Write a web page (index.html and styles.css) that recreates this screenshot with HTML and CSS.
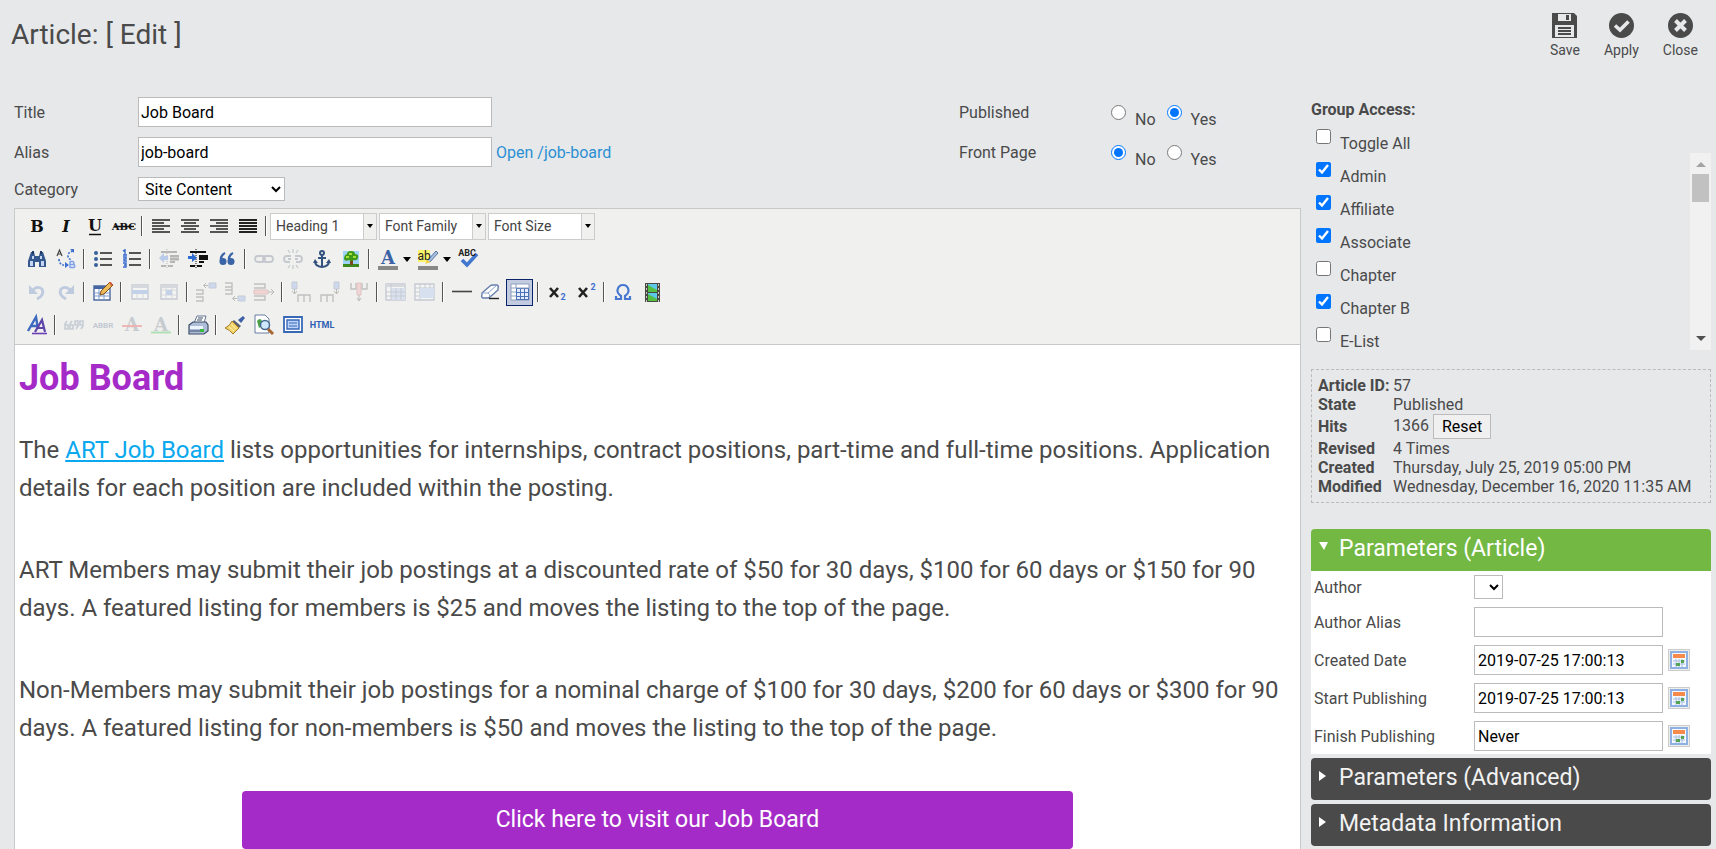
FILE: index.html
```html
<!DOCTYPE html>
<html lang="en">
<head>
  <meta charset="UTF-8" />
  <meta name="viewport" content="width=device-width, initial-scale=1" />
  <title>Article: [ Edit ]</title>
  <link rel="stylesheet" href="styles.css">
</head>
<body>
  <header class="page-header">
    <h1>Article: [ Edit ]</h1>
    <div class="actions">
      <button type="button">
        <svg viewBox="0 0 25 25"><path fill="#4a4a4a" d="M0 0h22l3 3v22H0z"/><path fill="#e6e8ea" d="M6 1h13v7H6zM3 12h19v12H3z"/><path fill="#4a4a4a" d="M14 2h3v5h-3zM6 14h13v2H6zM6 17h13v2H6zM6 20h13v2H6z"/></svg>
        Save
      </button>
      <button type="button">
        <svg viewBox="0 0 25 25"><circle cx="12.500" cy="12.500" r="12.500" fill="#4a4a4a"/><path fill="none" stroke="#e6e8ea" stroke-width="3.600" d="M6 12.500l5 4.500 8.500-8.500"/></svg>
        Apply
      </button>
      <button type="button">
        <svg viewBox="0 0 25 25"><circle cx="12.500" cy="12.500" r="12.500" fill="#4a4a4a"/><path fill="none" stroke="#e6e8ea" stroke-width="4" d="M7.500 7.500l10 10M17.500 7.500l-10 10"/></svg>
        Close
      </button>
    </div>
  </header>

  <main class="layout">
    <section class="main-col">
      <div class="fields">
        <div class="fields-left">
          <div class="field">
            <label for="title">Title</label>
            <input type="text" id="title" value="Job Board" />
          </div>
          <div class="field">
            <label for="alias">Alias</label>
            <input type="text" id="alias" value="job-board" />
            <a href="#job-board">Open /job-board</a>
          </div>
          <div class="field">
            <label for="category">Category</label>
            <select id="category"><option>Site Content</option></select>
          </div>
        </div>
        <div class="fields-right">
          <div class="field" role="radiogroup" aria-label="Published">
            <span class="field-name">Published</span>
            <label class="option"><input type="radio" name="published" /><span>No</span></label>
            <label class="option"><input type="radio" name="published" checked /><span>Yes</span></label>
          </div>
          <div class="field" role="radiogroup" aria-label="Front Page">
            <span class="field-name">Front Page</span>
            <label class="option"><input type="radio" name="frontpage" checked /><span>No</span></label>
            <label class="option"><input type="radio" name="frontpage" /><span>Yes</span></label>
          </div>
        </div>
      </div>

      <div class="editor">
        <div class="toolbar">
          <div class="toolbar-row">
            <button type="button" aria-label="Bold"><svg viewBox="0 0 20 20"><text x="10" y="16" class="glyph">B</text></svg></button>
            <button type="button" aria-label="Italic"><svg viewBox="0 0 20 20"><text x="10" y="16" class="glyph slanted">I</text></svg></button>
            <button type="button" aria-label="Underline"><svg viewBox="0 0 20 20"><text x="10" y="15" class="glyph">U</text><path d="M4 18.500h12" stroke="#111" stroke-width="1.500"/></svg></button>
            <button type="button" aria-label="Strikethrough"><svg viewBox="0 0 20 20"><text x="10" y="14" class="glyph tiny">ABC</text><path d="M0 10.500h20" stroke="#111" stroke-width="1.500"/></svg></button>
            <i class="sep"></i>
            <button type="button" aria-label="Align left"><svg viewBox="0 0 20 20"><path d="M1 4h18M1 7h12M1 10h18M1 13h12M1 16h18" stroke="#222" stroke-width="1.600"/></svg></button>
            <button type="button" aria-label="Align center"><svg viewBox="0 0 20 20"><path d="M1 4h18M4 7h12M1 10h18M4 13h12M1 16h18" stroke="#222" stroke-width="1.600"/></svg></button>
            <button type="button" aria-label="Align right"><svg viewBox="0 0 20 20"><path d="M1 4h18M7 7h12M1 10h18M7 13h12M1 16h18" stroke="#222" stroke-width="1.600"/></svg></button>
            <button type="button" aria-label="Align full"><svg viewBox="0 0 20 20"><path d="M1 4h18M1 7h18M1 10h18M1 13h18M1 16h18" stroke="#222" stroke-width="1.800"/></svg></button>
            <i class="sep"></i>
            <div class="listbox"><select aria-label="Format"><option>Heading 1</option></select><span></span></div>
            <div class="listbox"><select aria-label="Font family"><option>Font Family</option></select><span></span></div>
            <div class="listbox"><select aria-label="Font size"><option>Font Size</option></select><span></span></div>
          </div>

          <div class="toolbar-row">
            <button type="button" aria-label="Find"><svg viewBox="0 0 20 20"><path d="M4 3h3l1 4h4l1-4h3l3 9v6h-7v-5H8v5H1v-6z" fill="#34578f"/><path d="M5 2h2v3H5zM13 2h2v3h-2z" fill="#1f3a69"/><path d="M3 12h3v5H3zM14 12h3v5h-3zM5 7h2v3H5zM13 7h2v3h-2z" fill="#c3d5f1"/></svg></button>
            <button type="button" aria-label="Find and replace"><svg viewBox="0 0 20 20"><path d="M1 7l2.500-6L6 7M2 5h3" fill="none" stroke="#444" stroke-width="1.200"/><path d="M14 12v7M14 12.500h3q2 1.500 0 3h-3h4q1.500 1.500 0 3h-4" fill="none" stroke="#7c9fe8" stroke-width="1.400"/><path d="M3 10q0 7 8 6M17 2q-5 1-5 5t4 3" fill="none" stroke="#3f6fd0" stroke-width="1.600" stroke-dasharray="2 1.500"/><path d="M14 0h4v4zM9 13l4 3-4 3z" fill="#3f6fd0"/></svg></button>
            <i class="sep"></i>
            <button type="button" aria-label="Bullet list"><svg viewBox="0 0 20 20"><path d="M7 4h12M7 10h12M7 16h12" stroke="#222" stroke-width="1.500"/><g fill="#3a5f9c"><circle cx="3" cy="4" r="2"/><circle cx="3" cy="10" r="2"/><circle cx="3" cy="16" r="2"/></g></svg></button>
            <button type="button" aria-label="Numbered list"><svg viewBox="0 0 20 20"><path d="M7 4h12M7 10h12M7 16h12" stroke="#222" stroke-width="1.500"/><path d="M1 2l2-1v5M1 6h4M1 8h3v2H2v2h3M1 14h3v2H2h2v2H1" fill="none" stroke="#3a6bd0" stroke-width="1.400"/></svg></button>
            <i class="sep"></i>
            <button type="button" aria-label="Outdent" class="off"><svg viewBox="0 0 20 20"><path d="M2 3h16M11 7h9M11 13h5M2 17h5M9 17h5" stroke="#333" stroke-width="2"/><path d="M11 10h9" stroke="#333" stroke-width="3"/><path d="M8 0v20" stroke="#333" stroke-dasharray="1 1"/><path d="M9 7H5V4L0 9l5 5v-3h4z" fill="#3f7bdf"/></svg></button>
            <button type="button" aria-label="Indent"><svg viewBox="0 0 20 20"><path d="M2 3h16M11 7h9M11 13h5M2 17h5M9 17h5" stroke="#111" stroke-width="2"/><path d="M11 9.500h9" stroke="#111" stroke-width="3"/><path d="M8 0v20" stroke="#111" stroke-dasharray="1 1"/><path d="M0 7h4V4l5 5-5 4v-3H0z" fill="#2f6bd0"/></svg></button>
            <button type="button" aria-label="Blockquote"><svg viewBox="0 0 20 20"><g fill="#3a64a8"><circle cx="6" cy="12.500" r="3.500"/><circle cx="14" cy="12.500" r="3.500"/></g><path d="M4 12q-.500-6 4-8M12 12q-.500-6 4-8" fill="none" stroke="#3a64a8" stroke-width="2.400"/></svg></button>
            <i class="sep"></i>
            <button type="button" aria-label="Link" class="off"><svg viewBox="0 0 20 20"><g fill="none" stroke="#5f7085" stroke-width="1.800"><rect x="1" y="7" width="10" height="6" rx="3"/><rect x="9" y="7" width="10" height="6" rx="3"/></g></svg></button>
            <button type="button" aria-label="Unlink" class="off"><svg viewBox="0 0 20 20"><g fill="none" stroke="#5f7085" stroke-width="1.800"><path d="M8 7H4q-3 0-3 3t3 3h3M12 7h4q3 0 3 3t-3 3h-3M5 10h3M12 10h3"/><path d="M10 0v4M5 1l2 3M15 1l-2 3M10 20v-4M5 19l2-3M15 19l-2-3" stroke-width="1.200"/></g></svg></button>
            <button type="button" aria-label="Anchor"><svg viewBox="0 0 20 20"><g fill="none" stroke="#34527f" stroke-width="2"><circle cx="10" cy="4" r="2"/><path d="M10 6v12M6 9h8M3 12q0 5.500 7 6 7-.500 7-6"/></g><path d="M1 14l2-4 3 4zM14 14l3-4 2 4z" fill="#34527f"/></svg></button>
            <button type="button" aria-label="Image"><svg viewBox="0 0 20 20"><path fill="#9fd3f8" d="M2 2h16v16H2z"/><path fill="#3c8a1c" d="M2 15h16v3H2z"/><path fill="#7b4a1c" d="M9 9h3v7H9z"/><path fill="#3f9a18" d="M6 5q0-3 4-3t4 3q4 0 3 4-1 3-4 2-3 2-5 0-4 2-5-1 0-4 3-5z"/><path fill="#a6df3c" d="M8 4h3v2H8zM5 7h3v2H5zM12 7h3v2h-3z"/></svg></button>
            <i class="sep"></i>
            <button type="button" aria-label="Text color"><svg viewBox="0 0 20 20"><text x="10" y="15" class="glyph blue">A</text><path d="M0 17h20v4H0z" fill="#888"/></svg></button>
            <span class="caret"></span>
            <button type="button" aria-label="Highlight color"><svg viewBox="0 0 20 20"><path d="M0 1h12v12H0z" fill="#fbf36a"/><path d="M18 2l2 2-8 9-3-1z" fill="#a9c1e6" stroke="#5d7396"/><text x="6" y="11" class="ab">ab</text><path d="M9 11l4 2-6 2z" fill="#f0d34a"/><path d="M0 17h20v4H0z" fill="#888"/></svg></button>
            <span class="caret"></span>
            <button type="button" aria-label="Spellcheck"><svg viewBox="0 0 20 20"><path d="M4 11l5 5L19 5" fill="none" stroke="#4377cf" stroke-width="3.600"/><text x="9" y="7" class="spell">ABC</text></svg></button>
          </div>

          <div class="toolbar-row">
            <button type="button" aria-label="Undo" class="off"><svg viewBox="0 0 20 20"><path d="M5 9q5-6 10-2 3 6-5 10" fill="none" stroke="#4f78c0" stroke-width="2.800"/><path d="M2 3v9h9z" fill="#4f78c0"/></svg></button>
            <button type="button" aria-label="Redo" class="off"><svg viewBox="0 0 20 20"><path d="M15 9Q10 3 5 7q-3 6 5 10" fill="none" stroke="#4f78c0" stroke-width="2.800"/><path d="M18 3v9H9z" fill="#4f78c0"/></svg></button>
            <i class="sep"></i>
            <button type="button" aria-label="Table"><svg viewBox="0 0 20 20"><path d="M1 4h16v14H1z" fill="#fff" stroke="#4d6a9e" stroke-width="1.400"/><path d="M1 4h16v3H1z" fill="#44659f"/><path d="M1 11h16M1 14h16M6 7v11M11 7v11" stroke="#7b9bcc"/><path d="M17 0l3 3-9 9-4 1 1-4z" fill="#edbb5a" stroke="#7b501d"/><path d="M16 0h2l2 3-2 1z" fill="#d35a3c"/></svg></button>
            <i class="sep"></i>
            <button type="button" aria-label="Row properties" class="off"><svg viewBox="0 0 20 20"><path d="M2 3h16v14H2z" fill="#fff" stroke="#667999" stroke-width="1.400"/><path d="M2 3h16v3H2z" fill="#99a5b8"/><path d="M2 8h16v4H2z" fill="#5f8be0"/><path d="M7 12v5M13 12v5" stroke="#99a5b8"/></svg></button>
            <button type="button" aria-label="Cell properties" class="off"><svg viewBox="0 0 20 20"><path d="M2 3h16v14H2z" fill="#fff" stroke="#667999" stroke-width="1.400"/><path d="M2 3h16v3H2z" fill="#99a5b8"/><path d="M2 8h16M2 13h16M7 3v14M13 3v14" stroke="#99a5b8"/><path d="M7 8h6v5H7z" fill="#5f8be0"/></svg></button>
            <i class="sep"></i>
            <button type="button" aria-label="Insert row before" class="off"><svg viewBox="0 0 20 20"><path d="M0 8h7v4H0M0 19h7v-4H0M0 12h7" fill="none" stroke="#555" stroke-width="1.400"/><path d="M13 1h7v5h-7z" fill="#7fa4ef" stroke="#667999"/><path d="M12 3.500H8M10 1L7.500 3.500 10 6" fill="none" stroke="#444"/></svg></button>
            <button type="button" aria-label="Insert row after" class="off"><svg viewBox="0 0 20 20"><path d="M0 1h7v4H0M0 12h7V5M0 8h7" fill="none" stroke="#555" stroke-width="1.400"/><path d="M13 14h7v5h-7z" fill="#7fa4ef" stroke="#667999"/><path d="M12 16.500H8M10 14l-2.500 2.500L10 19" fill="none" stroke="#444"/></svg></button>
            <button type="button" aria-label="Delete row" class="off"><svg viewBox="0 0 20 20"><path d="M0 2h11v4H0M0 18h11v-4H0" fill="none" stroke="#555" stroke-width="1.400"/><path d="M0 8h14v4H0z" fill="#f39a9a" stroke="#b66"/><path d="M14 10h6M17 7l3 3-3 3" fill="none" stroke="#444"/></svg></button>
            <i class="sep"></i>
            <button type="button" aria-label="Insert column before" class="off"><svg viewBox="0 0 20 20"><path d="M7 20v-7h12v7M13 13v7" fill="none" stroke="#555" stroke-width="1.400"/><path d="M1 0h5v7H1z" fill="#7fa4ef" stroke="#667999"/><path d="M3.500 7v5M1 9l2.500 3L6 9" fill="none" stroke="#444"/></svg></button>
            <button type="button" aria-label="Insert column after" class="off"><svg viewBox="0 0 20 20"><path d="M1 20v-7h12v7M7 13v7" fill="none" stroke="#555" stroke-width="1.400"/><path d="M14 0h5v7h-5z" fill="#7fa4ef" stroke="#667999"/><path d="M16.500 7v5M14 9l2.500 3L19 9" fill="none" stroke="#444"/></svg></button>
            <button type="button" aria-label="Delete column" class="off"><svg viewBox="0 0 20 20"><path d="M2 1v6h5V1M18 1v6h-5V1" fill="none" stroke="#555" stroke-width="1.400"/><path d="M8 1h4v12H8z" fill="#f39a9a" stroke="#b66"/><path d="M10 13v6M8 16l2 3 2-3" fill="none" stroke="#444"/></svg></button>
            <i class="sep"></i>
            <button type="button" aria-label="Split cells" class="off"><svg viewBox="0 0 20 20"><path d="M0 2h19v16H0z" fill="#fff" stroke="#667999" stroke-width="1.400"/><path d="M0 2h19v3H0z" fill="#99a5b8"/><path d="M5 6h14v12H5z" fill="#aac4f2"/><path d="M0 10h19M0 14h19M5 2v16M10 6v12M15 6v12" stroke="#667999"/></svg></button>
            <button type="button" aria-label="Merge cells" class="off"><svg viewBox="0 0 20 20"><path d="M0 2h19v16H0z" fill="#fff" stroke="#667999" stroke-width="1.400"/><path d="M0 6h19M0 10h5M0 14h5M5 2v16M10 2v4M15 2v4" stroke="#667999"/><path d="M5 6h14v10H5z" fill="#9fbcf0"/></svg></button>
            <i class="sep"></i>
            <button type="button" aria-label="Horizontal rule"><svg viewBox="0 0 20 20"><path d="M0 9.500h20" stroke="#444" stroke-width="1.600"/></svg></button>
            <button type="button" aria-label="Remove formatting"><svg viewBox="0 0 20 20"><path d="M1 11l8-7q1-1 3-1h4q2 1 1 3v2l-8 7q-1 1-3 1H2q-2-1-1-3z" fill="#fff" stroke="#667fae" stroke-width="1.400"/><path d="M1 11h6q2 1 2 4M7 11l9-8" fill="none" stroke="#8ba2cb"/><path d="M8 16.500h10" stroke="#222" stroke-width="1.400"/></svg></button>
            <button type="button" aria-label="Guidelines" class="active"><svg viewBox="0 0 20 20"><path d="M1 2h18v16H1z" fill="#fff" stroke="#8e9fbd"/><path d="M6 6h13v12H6z" fill="#4a70b8"/><path d="M1 6h18M1 10h5M1 14h5M6 2v4" stroke="#8e9fbd"/><path d="M7 7h3v3H7zM11 7h3v3h-3zM15 7h3v3h-3zM7 11h3v3H7zM11 11h3v3h-3zM15 11h3v3h-3zM7 15h3v2H7zM11 15h3v2h-3zM15 15h3v2h-3z" fill="#e3edff"/></svg></button>
            <i class="sep"></i>
            <button type="button" aria-label="Subscript"><svg viewBox="0 0 20 20"><path d="M3 6l8 9M11 6l-8 9" stroke="#222" stroke-width="2.600"/><text x="16" y="18" class="index">2</text></svg></button>
            <button type="button" aria-label="Superscript"><svg viewBox="0 0 20 20"><path d="M3 6l8 9M11 6l-8 9" stroke="#222" stroke-width="2.600"/><text x="17" y="8" class="index">2</text></svg></button>
            <i class="sep"></i>
            <button type="button" aria-label="Special character"><svg viewBox="0 0 20 20"><path d="M3 14v3h5v-3q-4-3-3.500-6Q5.500 3 10 3t5.500 5q.500 3-3.500 6v3h5v-3" fill="none" stroke="#4777d1" stroke-width="2.200"/></svg></button>
            <button type="button" aria-label="Media"><svg viewBox="0 0 20 20"><path d="M3 1h15v19H3z" fill="#4a4a42"/><path d="M6 2h9v8H6zM6 11h9v8H6z" fill="#5cc8ea"/><path d="M6 3l9 5v2H6zM6 12l9 5v2H6z" fill="#52c043"/><path d="M4.500 2v18M16.500 2v18" stroke="#ccc" stroke-dasharray="2 2"/></svg></button>
          </div>

          <div class="toolbar-row">
            <button type="button" aria-label="Edit style"><svg viewBox="0 0 20 20"><path d="M1 16L9 2l2 12M4 11h6" fill="none" stroke="#3d6ac0" stroke-width="2.400"/><path d="M8 17l7-12 3 12M10 13h6" fill="none" stroke="#5d44a8" stroke-width="2.200"/><path d="M5 18.500h15" stroke="#6c3fb5" stroke-width="1.600"/></svg></button>
            <i class="sep"></i>
            <button type="button" aria-label="Citation" class="off"><svg viewBox="0 0 20 20"><path d="M3 6L1 9v5h3v-4H1M8 6L6 9v5h3v-4H6M12 14l2-3V6h-3v4h3M17 14l2-3V6h-3v4h3" fill="none" stroke="#68809f" stroke-width="1.600"/></svg></button>
            <button type="button" aria-label="Abbreviation" class="off"><svg viewBox="0 0 20 20"><text x="10" y="13" class="label-text">ABBR</text></svg></button>
            <button type="button" aria-label="Deletion" class="off"><svg viewBox="0 0 20 20"><text x="10" y="16" class="glyph grey">A</text><path d="M0 11h20" stroke="#ee2222" stroke-width="1.800"/></svg></button>
            <button type="button" aria-label="Insertion" class="off"><svg viewBox="0 0 20 20"><text x="10" y="16" class="glyph grey">A</text><path d="M0 17.500h20" stroke="#11bb22" stroke-width="1.800"/></svg></button>
            <i class="sep"></i>
            <button type="button" aria-label="Print"><svg viewBox="0 0 20 20"><path d="M6 8l3-7h9l-2 7z" fill="#fff" stroke="#627594"/><path d="M1 10l4-3h13l2 3v6l-4 3H1z" fill="#aebed8" stroke="#3c4d69" stroke-width="1.200"/><path d="M2 11h13v3H2z" fill="#eef4ff"/><path d="M2 16h12M10 3h5M9 5h5" stroke="#3c4d69"/><path d="M12 14h4v3h-4z" fill="#39b83d"/></svg></button>
            <i class="sep"></i>
            <button type="button" aria-label="Clean up code"><svg viewBox="0 0 20 20"><path d="M13 5l5-4 2 2-4 5z" fill="#3f61a5"/><path d="M9 5l7 6-2 2-7-6z" fill="#596274"/><path d="M7 6l7 7-6 6q-3-4-8-6 5-2 7-7z" fill="#f2d36b" stroke="#a47b24"/><path d="M4 12l5 4M6 9l5 5" stroke="#fff2ad"/></svg></button>
            <button type="button" aria-label="Preview"><svg viewBox="0 0 20 20"><path d="M1 0h10l4 4v14H1z" fill="#fff" stroke="#667ca1"/><path d="M3 6q3-4 5 0t-3 7z" fill="#49a24a"/><circle cx="11" cy="10" r="4.500" fill="#cee9fb" stroke="#47698f" stroke-width="1.500"/><path d="M14 14l5 5" stroke="#a76632" stroke-width="3"/></svg></button>
            <button type="button" aria-label="Fullscreen"><svg viewBox="0 0 20 20"><path d="M1 2h18v15H1z" fill="#fff" stroke="#3968b7" stroke-width="1.800"/><path d="M4 5h12v9H4z" fill="#bbd2f9" stroke="#3968b7" stroke-width="1.400"/><path d="M6 8h8M6 11h8" stroke="#3968b7"/></svg></button>
            <button type="button" aria-label="HTML source"><svg viewBox="0 0 24 20" class="wide"><text x="12" y="13" class="label-text html">HTML</text></svg></button>
          </div>
        </div>

        <article class="content">
          <h2>Job Board</h2>
          <p>The <a href="#board">ART Job Board</a> lists opportunities for internships, contract positions, part-time and full-time positions. Application details for each position are included within the posting.</p>
          <p>ART Members may submit their job postings at a discounted rate of $50 for 30 days, $100 for 60 days or $150 for 90 days. A featured listing for members is $25 and moves the listing to the top of the page.</p>
          <p>Non-Members may submit their job postings for a nominal charge of $100 for 30 days, $200 for 60 days or $300 for 90 days. A featured listing for non-members is $50 and moves the listing to the top of the page.</p>
          <a class="cta" href="#board">Click here to visit our Job Board</a>
        </article>
      </div>
    </section>

    <aside class="side-col">
      <h3>Group Access:</h3>
      <div class="group-row"><label class="option"><input type="checkbox" /><span>Toggle All</span></label></div>
      <div class="group-box">
        <div class="group-list">
          <div class="group-row"><label class="option"><input type="checkbox" checked /><span>Admin</span></label></div>
          <div class="group-row"><label class="option"><input type="checkbox" checked /><span>Affiliate</span></label></div>
          <div class="group-row"><label class="option"><input type="checkbox" checked /><span>Associate</span></label></div>
          <div class="group-row"><label class="option"><input type="checkbox" /><span>Chapter</span></label></div>
          <div class="group-row"><label class="option"><input type="checkbox" checked /><span>Chapter B</span></label></div>
          <div class="group-row"><label class="option"><input type="checkbox" /><span>E-List</span></label></div>
        </div>
        <div class="scrollbar">
          <span class="arrow up"></span>
          <span class="thumb"></span>
          <span class="arrow down"></span>
        </div>
      </div>

      <div class="info">
        <table>
          <tr><th scope="row">Article ID:</th><td>57</td></tr>
          <tr><th scope="row">State</th><td>Published</td></tr>
          <tr><th scope="row">Hits</th><td>1366 <button type="button">Reset</button></td></tr>
          <tr><th scope="row">Revised</th><td>4 Times</td></tr>
          <tr><th scope="row">Created</th><td>Thursday, July 25, 2019 05:00 PM</td></tr>
          <tr><th scope="row">Modified</th><td>Wednesday, December 16, 2020 11:35 AM</td></tr>
        </table>
      </div>

      <details class="panel" open>
        <summary>Parameters (Article)</summary>
        <div class="panel-body">
          <div class="param">
            <label for="author">Author</label>
            <select id="author"><option></option></select>
          </div>
          <div class="param">
            <label for="author_alias">Author Alias</label>
            <input type="text" id="author_alias" />
          </div>
          <div class="param">
            <label for="created">Created Date</label>
            <input type="text" id="created" value="2019-07-25 17:00:13" />
            <button type="button" class="calendar" aria-label="Pick created date"><svg viewBox="0 0 18 18"><path fill="#8fb0e2" d="M0 0h18v18H0z"/><path fill="#f4f8ff" d="M2 2h14v14H2z"/><path fill="#f58a4b" d="M3 3h12v4H3z"/><path d="M3 10h12M3 13h12M6 8v8M9 8v8M12 8v8" stroke="#aabfdd"/><path fill="#55a455" d="M11 9h3v3h-3zM6 12h4v3H6z"/></svg></button>
          </div>
          <div class="param">
            <label for="start">Start Publishing</label>
            <input type="text" id="start" value="2019-07-25 17:00:13" />
            <button type="button" class="calendar" aria-label="Pick start date"><svg viewBox="0 0 18 18"><path fill="#8fb0e2" d="M0 0h18v18H0z"/><path fill="#f4f8ff" d="M2 2h14v14H2z"/><path fill="#f58a4b" d="M3 3h12v4H3z"/><path d="M3 10h12M3 13h12M6 8v8M9 8v8M12 8v8" stroke="#aabfdd"/><path fill="#55a455" d="M11 9h3v3h-3zM6 12h4v3H6z"/></svg></button>
          </div>
          <div class="param">
            <label for="finish">Finish Publishing</label>
            <input type="text" id="finish" value="Never" />
            <button type="button" class="calendar" aria-label="Pick finish date"><svg viewBox="0 0 18 18"><path fill="#8fb0e2" d="M0 0h18v18H0z"/><path fill="#f4f8ff" d="M2 2h14v14H2z"/><path fill="#f58a4b" d="M3 3h12v4H3z"/><path d="M3 10h12M3 13h12M6 8v8M9 8v8M12 8v8" stroke="#aabfdd"/><path fill="#55a455" d="M11 9h3v3h-3zM6 12h4v3H6z"/></svg></button>
          </div>
        </div>
      </details>
      <details class="panel">
        <summary>Parameters (Advanced)</summary>
      </details>
      <details class="panel">
        <summary>Metadata Information</summary>
      </details>
    </aside>
  </main>
</body>
</html>
```
FILE: styles.css
```css
:root {
  --page-bg: #e6e8ea;
  --text-color: #4a4a4a;
  --border-color: #bbb;
  --green: #72b843;
  --purple: #a52bc8;
}

* {
  box-sizing: border-box;
}

body {
  margin: 0;
  min-height: 100vh;
  display: flex;
  flex-direction: column;
  background-color: var(--page-bg);
  color: var(--text-color);
  font-family: Roboto, sans-serif;
  font-size: 16px;
  line-height: 19px;
}

input,
select,
button {
  font-family: inherit;
  font-size: 16px;
  margin: 0;
}

input[type="text"] {
  height: 30px;
  padding: 0 2px;
  border: 1px solid var(--border-color);
  background-color: #fff;
  color: #000;
}

select {
  height: 24px;
  border: 1px solid var(--border-color);
  background-color: #fff;
  color: #000;
}

a {
  color: #2b90d4;
  text-decoration: none;
}

svg {
  display: block;
}

/* header */
.page-header {
  display: flex;
  justify-content: space-between;
  height: 97px;
  padding: 13px 18px 0 11px;
}

.page-header h1 {
  margin: 0;
  font-size: 28px;
  font-weight: 400;
  line-height: 44px;
}

.actions {
  display: flex;
  align-items: flex-start;
  gap: 24px;
}

.actions button {
  display: flex;
  flex-direction: column;
  align-items: center;
  gap: 4px;
  padding: 0;
  border: none;
  background: none;
  color: var(--text-color);
  font-size: 14px;
  line-height: 16px;
  cursor: pointer;
}

.actions svg {
  width: 25px;
  height: 25px;
}

.layout {
  display: flex;
  flex: 1;
  gap: 10px;
  padding: 0 5px 0 14px;
}

.main-col {
  flex: 1;
  min-width: 0;
  display: flex;
  flex-direction: column;
}

.side-col {
  width: 400px;
  flex: none;
}

/* form fields */
.fields {
  display: flex;
  justify-content: space-between;
  padding-bottom: 7px;
}

.fields-left,
.fields-right {
  display: flex;
  flex-direction: column;
  gap: 10px;
}

.fields-right {
  width: 342px;
}

.field {
  display: flex;
  align-items: center;
}

.fields-right .field {
  height: 30px;
}

.fields-left label {
  width: 124px;
}

.fields-left input {
  width: 354px;
}

.fields-left a {
  margin-left: 4px;
}

.fields-left select {
  width: 147px;
  padding-left: 2px;
}

.field-name {
  width: 152px;
}

.option {
  display: flex;
  align-items: flex-start;
  gap: 9px;
  height: 16px;
}

.option input {
  width: 15px;
  height: 15px;
  margin-top: 1px;
}

.option span {
  padding-top: 6px;
}

.fields-right .option {
  margin-right: 11px;
}

/* editor */
.editor {
  flex: 1;
  border: 1px solid #c8c8c8;
  border-bottom: none;
  background-color: #fff;
}

.toolbar {
  display: flex;
  flex-direction: column;
  gap: 5px;
  padding: 3px 7px 5px;
  border-bottom: 1px solid #c8c8c8;
  background-color: #f0f0ee;
}

.toolbar-row {
  display: flex;
  align-items: center;
  height: 28px;
}

.toolbar button {
  display: flex;
  align-items: center;
  justify-content: center;
  width: 27px;
  height: 27px;
  margin: 0 1px;
  padding: 0;
  border: 1px solid transparent;
  background: none;
}

.toolbar button.off {
  opacity: 0.3;
}

.toolbar button.active {
  border-color: #0a246a;
  background-color: #c2cbe0;
}

.toolbar svg {
  flex: none;
  width: 20px;
  height: 20px;
  overflow: visible;
}

.toolbar svg.wide {
  width: 24px;
}

.sep {
  width: 2px;
  height: 20px;
  margin: 0 3px;
  border-left: 1px solid #555;
  background-color: #fff;
}

.caret {
  width: 0;
  margin: 0 2px 0 1px;
  border: 4px solid transparent;
  border-top: 5px solid #000;
  border-bottom: none;
}

.glyph {
  font-family: "DejaVu Serif", serif;
  font-size: 16px;
  font-weight: 700;
  text-anchor: middle;
  fill: #111;
}

.slanted {
  font-style: italic;
}

.tiny {
  font-size: 10px;
}

.blue {
  font-size: 18px;
  fill: #3b62a5;
}

.grey {
  font-size: 18px;
  fill: #68788d;
}

.ab {
  font-size: 12px;
  text-anchor: middle;
  fill: #222;
}

.spell,
.label-text,
.index {
  font-size: 9px;
  font-weight: 700;
  text-anchor: middle;
  fill: #222;
}

.label-text {
  font-size: 8px;
  fill: #596f91;
}

.html {
  font-size: 9px;
  fill: #2e5fb4;
}

.index {
  fill: #3f6fd0;
}

.listbox {
  display: flex;
  width: 107px;
  height: 27px;
  margin-right: 2px;
  border: 1px solid #ccc;
  background-color: #fff;
}

.listbox select {
  flex: 1;
  min-width: 0;
  height: 25px;
  padding: 0 5px;
  border: none;
  appearance: none;
  color: #444;
  font-size: 14px;
}

.listbox span {
  display: flex;
  align-items: center;
  justify-content: center;
  width: 13px;
  border-left: 1px solid #ccc;
  background-color: #f0f0ee;
}

.listbox span::after {
  content: "";
  border: 3px solid transparent;
  border-top: 4px solid #000;
  border-bottom: none;
}

.content {
  padding: 14px 4px 0;
  font-size: 24px;
  line-height: 38px;
}

.content h2 {
  margin: 0 0 34px;
  color: var(--purple);
  font-size: 36px;
  line-height: 38px;
}

.content p {
  margin: 0 0 44px;
}

.content p a {
  color: #0aa8ee;
  text-decoration: underline;
}

.content .cta {
  display: block;
  width: 65%;
  margin: 0 auto;
  padding: 10px;
  border-radius: 4px;
  background-color: var(--purple);
  color: #fff;
  font-size: 23px;
  text-align: center;
}

/* group access */
.side-col h3 {
  margin: 3px 0 0;
  font-size: 16px;
  line-height: 20px;
}

.group-row {
  height: 33px;
  padding: 8px 0 0 5px;
}

.group-box {
  display: flex;
  justify-content: space-between;
  height: 197px;
  margin-bottom: 19px;
  overflow: hidden;
}

.scrollbar {
  display: flex;
  flex-direction: column;
  align-items: center;
  width: 21px;
  padding: 9px 0;
  background-color: #f1f1f1;
}

.arrow {
  border: 5px solid transparent;
}

.arrow.up {
  border-top: none;
  border-bottom-color: #a3a3a3;
}

.arrow.down {
  margin-top: auto;
  border-bottom: none;
  border-top-color: #505050;
}

.thumb {
  width: 17px;
  height: 28px;
  margin-top: 7px;
  background-color: #c1c1c1;
}

/* article info */
.info {
  margin-bottom: 26px;
  padding: 6px;
  border: 1px dashed var(--border-color);
}

.info table {
  border-collapse: collapse;
}

.info th,
.info td {
  padding: 0;
  text-align: left;
  white-space: nowrap;
}

.info th {
  width: 75px;
}

.info button {
  height: 25px;
  padding: 0 8px;
  border: 1px solid var(--border-color);
  background-color: #f0f0f0;
  color: #000;
  vertical-align: middle;
}

/* accordion panels */
.panel {
  margin-bottom: 4px;
}

.panel summary {
  display: flex;
  height: 42px;
  padding-left: 8px;
  border-radius: 4px;
  background-color: #4a4a4a;
  color: #f2f2f2;
  font-size: 23px;
  line-height: 40px;
  list-style: none;
  cursor: pointer;
}

.panel summary::before {
  content: "";
  width: 20px;
  height: 10px;
  margin-top: 13px;
  background-color: #fff;
  clip-path: polygon(0 0, 7px 5px, 0 10px);
}

.panel[open] summary {
  border-radius: 4px 4px 0 0;
  background-color: var(--green);
  color: #fff;
}

.panel[open] summary::before {
  clip-path: polygon(0 0, 9px 0, 5px 8px);
}

.panel-body {
  display: flex;
  flex-direction: column;
  gap: 8px;
  padding: 4px 4px 3px 3px;
  background-color: #fff;
}

.param {
  display: flex;
  align-items: center;
}

.param label {
  width: 160px;
}

.param input[type="text"] {
  width: 189px;
  padding: 0 3px;
}

.param select {
  width: 29px;
}

.calendar {
  width: 22px;
  height: 22px;
  margin-left: 5px;
  padding: 1px;
  border: 1px solid #ccc;
  background-color: #eee;
}
```
